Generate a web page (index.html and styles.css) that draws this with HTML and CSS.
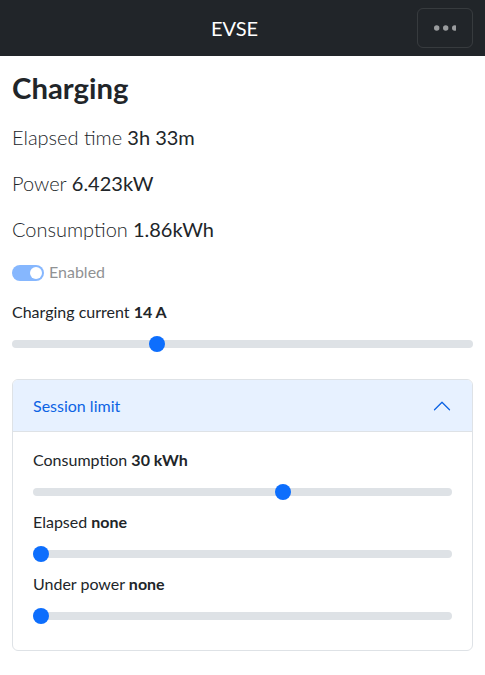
FILE: index.html
```html
<!DOCTYPE html>
<html lang="en">
<head>
<meta charset="utf-8">
<title>EVSE</title>
<link rel="stylesheet" href="styles.css">
</head>
<body>
<nav class="navbar">
  <span class="brand">EVSE</span>
  <button class="toggler" type="button" aria-label="Menu">
    <svg width="22" height="6" viewBox="0 0 22 6" aria-hidden="true">
      <circle cx="2.7" cy="3" r="2.7" fill="currentColor"/>
      <circle cx="11.7" cy="3" r="2.7" fill="currentColor"/>
      <circle cx="20.7" cy="3" r="2.7" fill="currentColor"/>
    </svg>
  </button>
</nav>
<main class="content">
  <h1 class="title">Charging</h1>
  <p class="stat"><span class="stat-label">Elapsed time</span> 3h 33m</p>
  <p class="stat"><span class="stat-label">Power</span> 6.423kW</p>
  <p class="stat"><span class="stat-label">Consumption</span> 1.86kWh</p>
  <div class="switch-row">
    <span class="switch"><span class="knob"></span></span>
    <span class="switch-label">Enabled</span>
  </div>
  <div class="range-group">
    <label class="range-label">Charging current <b>14 A</b></label>
    <input class="range" type="range" min="6" max="32" value="14">
  </div>
  <section class="accordion">
    <button class="acc-header" type="button">
      <span>Session limit</span>
      <svg class="chevron" width="20" height="20" viewBox="0 0 16 16" aria-hidden="true">
        <path fill="#0c63e4" fill-rule="evenodd" d="M1.646 4.646a.5.5 0 0 1 .708 0L8 10.293l5.646-5.647a.5.5 0 0 1 .708.708l-6 6a.5.5 0 0 1-.708 0l-6-6a.5.5 0 0 1 0-.708z"/>
      </svg>
    </button>
    <div class="acc-body">
      <div class="range-group">
        <label class="range-label">Consumption <b>30 kWh</b></label>
        <input class="range" type="range" min="0" max="50" value="30">
      </div>
      <div class="range-group">
        <label class="range-label">Elapsed <b>none</b></label>
        <input class="range" type="range" min="0" max="100" value="0">
      </div>
      <div class="range-group">
        <label class="range-label">Under power <b>none</b></label>
        <input class="range" type="range" min="0" max="100" value="0">
      </div>
    </div>
  </section>
</main>
</body>
</html>
```
FILE: styles.css
```css
* { box-sizing: border-box; }
body {
  margin: 0;
  font-family: Lato, "Liberation Sans", sans-serif;
  font-size: 16px;
  line-height: 1.5;
  color: #212529;
  background: #fff;
}
.navbar {
  height: 56px;
  background: #212529;
  display: grid;
  grid-template-columns: 1fr auto 1fr;
  align-items: center;
  padding: 0 12px;
}
.brand {
  grid-column: 2;
  color: #fff;
  font-size: 20px;
  line-height: 30px;
  margin-right: 16px;
}
.toggler {
  grid-column: 3;
  justify-self: end;
  width: 56px;
  height: 40px;
  border: 1px solid rgba(255,255,255,.1);
  border-radius: 6px;
  background: transparent;
  color: rgba(255,255,255,.55);
  display: flex;
  align-items: center;
  justify-content: center;
  padding: 0;
}
.toggler svg { display: block; margin-top: -1px; }
.content { padding: 14px 12px 0; }
.title {
  margin: 0 0 17px;
  font-size: 29.3px;
  line-height: 1.2;
  font-weight: 700;
}
.stat {
  margin: 0 0 16px;
  font-size: 20px;
  line-height: 30px;
}
.stat-label { font-weight: 300; }
.switch-row {
  display: flex;
  align-items: flex-start;
  gap: 5px;
  height: 24px;
  margin-bottom: 16px;
}
.switch {
  margin-top: 5px;
  width: 32px;
  height: 16px;
  border-radius: 8px;
  background: #86b7fe;
  display: flex;
  justify-content: flex-end;
  align-items: center;
  padding: 0 2px;
}
.knob {
  width: 12px;
  height: 12px;
  border-radius: 50%;
  background: #fff;
}
.switch-label { color: #909294; }
.range-group { padding-bottom: 6px; }
.range-label {
  display: block;
  margin-bottom: 8px;
}
.range-label b { font-weight: 700; }
.range {
  -webkit-appearance: none;
  appearance: none;
  display: block;
  width: 100%;
  height: 24px;
  margin: 0;
  padding: 0;
  background: transparent;
}
.range::-webkit-slider-runnable-track {
  height: 8px;
  background: #dee2e6;
  border-radius: 16px;
  border: 0;
}
.range::-webkit-slider-thumb {
  -webkit-appearance: none;
  appearance: none;
  width: 16px;
  height: 16px;
  margin-top: -4px;
  border: 0;
  border-radius: 50%;
  background: #0d6efd;
}
.accordion {
  margin-top: 17px;
  border: 1px solid #dee2e6;
  border-radius: 6px;
  overflow: hidden;
}
.acc-header {
  width: 100%;
  display: flex;
  align-items: center;
  justify-content: space-between;
  padding: 14px 20px;
  border: 0;
  background: #e7f1ff;
  color: #0c63e4;
  box-shadow: inset 0 -1px 0 #dee2e6;
  font: inherit;
  text-align: left;
}
.chevron { transform: rotate(180deg); display: block; }
.acc-body { padding: 16px 20px 16px; }
```
